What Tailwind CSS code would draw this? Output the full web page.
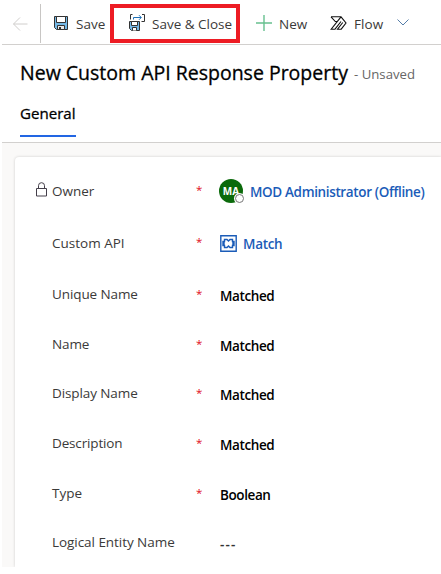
<!DOCTYPE html>
<html lang="en">
<head>
<meta charset="utf-8">
<title>New Custom API Response Property</title>
<script src="https://cdn.jsdelivr.net/npm/@tailwindcss/browser@4"></script>
</head>
<body class="h-[574px] w-[441px] overflow-hidden bg-white pl-[2px] font-['Segoe_UI','Open_Sans',sans-serif] text-[13.5px] leading-5 text-[#3b3a39]">
<header class="relative flex h-[45px] items-center border-b border-[#d2d0ce] pt-[3px]">
  <svg class="ml-[10px] h-4 w-4" viewBox="0 0 16 16" fill="none" stroke="#d0cecc"><path d="M15.5 8H1.5M8 1.5 1.5 8 8 14.500"/></svg>
  <i class="-mt-[1px] ml-[12px] h-[39px] w-px bg-[#c8c6c4]"></i>
  <svg class="-mt-[2px] ml-[12px] h-[16px] w-[16px]" viewBox="0 0 16 16"><path d="M1.500 1.500h13v13h-11l-2-2z" fill="#75b9e7" stroke="#333"/><path d="M3.500 1.500h9v6h-9z" fill="#fff" stroke="#333"/><path d="M4.500 14.500v-4h7v4z" fill="#e9e9e9" stroke="#333"/><path d="M6 12h2v2H6z" fill="#333"/></svg>
  <span class="ml-[7px] w-[53px] whitespace-nowrap">Save</span>
  <svg class="-mt-[2px] h-[17px] w-[16px]" viewBox="0 0 16 17" fill="none"><path d="M.500 7.500h10v9h-8l-2-2z" fill="#75b9e7" stroke="#333"/><path d="M2.500 7.500h6v4h-6z" fill="#fff" stroke="#333"/><path d="M3.500 16.500v-3h4v3" fill="#fff" stroke="#333"/><path d="M1.500 5.500v-5h2M13 .500h2.500v7h-3" stroke="#333"/><path d="M4.500 5.500v-2H12M10 1.200l2.300 2.300L10 5.800" stroke="#1d70b7"/></svg>
  <span class="ml-[7px] w-[104px] whitespace-nowrap">Save &amp; Close</span>
  <svg class="-mt-[1px] h-4 w-4" viewBox="0 0 16 16" stroke="#67c08f" stroke-width="1.400"><path d="M8 0v16M0 8h16"/></svg>
  <span class="ml-[7px] w-[51px] whitespace-nowrap">New</span>
  <svg class="-mt-[2px] h-[14px] w-[17px]" viewBox="0 0 17 14" fill="none" stroke="#111" stroke-width="1.100"><path d="M1 .8h10L16 7l-4.800 6.200H7.500L12.800 6.500M1 .8l4.300 4.700h2.200M11 .8 1.200 13.200H5L11 5.500"/></svg>
  <span class="ml-[7px] w-[43px] whitespace-nowrap tracking-[0.1px]">Flow</span>
  <svg class="-mt-[2px] h-[7px] w-[12px]" viewBox="0 0 12 7" fill="none" stroke="#557da8"><path d="M.5.5 6 6 11.500.5"/></svg>
  <div class="absolute left-[108px] top-[4px] h-[39px] w-[130px] border-4 border-[#ed1c24]"></div>
</header>
<section class="h-[98px] border-b border-[#d2d0ce] pl-[18px]">
  <div class="flex h-[54px] items-center">
    <h1 class="w-[334px] whitespace-nowrap pt-[1px] text-[19.5px] font-normal leading-7 text-black [-webkit-text-stroke:0.3px_black]">New Custom API Response Property</h1>
    <span class="mt-[3px] whitespace-nowrap text-[13.2px] text-[#666]">- Unsaved</span>
  </div>
  <div class="flex h-[38px] w-[56px] items-start border-b-2 border-[#2266e3] pt-[4px]"><span class="whitespace-nowrap text-[15.1px] font-normal text-black [-webkit-text-stroke:0.3px_black]">General</span></div>
</section>
<main class="h-[424px] bg-[#faf9f8] pl-[13px] pt-[14px]">
  <div class="h-[410px] rounded-tl-[4px] bg-white pt-[8px] shadow-[0_0_3px_rgba(0,0,0,.18)]">
    <div class="flex h-[52px] items-center">
      <svg class="-mt-[4px] ml-[21px] h-[15px] w-[11px]" viewBox="0 0 11 15" fill="none" stroke="#443f4a"><path d="M.5 6.500h10v7.500H.5zM2.500 6.500V3.700a3 3 0 0 1 6 0v2.800"/></svg>
      <span class="ml-[5px] w-[144px]">Owner</span><span class="-mt-[2px] w-[23px] text-[11.5px] text-[#e00b1c]">*</span>
      <div class="relative flex size-[24px] items-center justify-center rounded-full bg-[#0b6a0b] text-[10px] font-bold text-white">MA<i class="absolute -right-[1px] bottom-0 size-[9px] rounded-full border border-[#777] bg-white ring-1 ring-white"></i></div>
      <span class="ml-[7px] mt-[2px] whitespace-nowrap font-semibold tracking-[-0.36px] text-[#1b5cb8]">MOD Administrator (Offline)</span>
    </div>
    <div class="flex h-[53px] items-center pl-[37px]"><span class="-mt-[2px] w-[144px]">Custom API</span><span class="-mt-[3px] w-[24px] text-[11.5px] text-[#e00b1c]">*</span>
      <svg class="size-[17px]" viewBox="0 0 17 17" fill="none" stroke="#1b5cb8"><path d="M.8.8h15.400v15.400H.8z" stroke-width="1.400"/><path d="M4.500 6.500v-2h2.500l1.500 1.500L10 4.500h2.500v2h1.500v1.200h-1v1.600h1v1.200h-1.500v2H10L8.500 11 7 12.500H4.500v-2H3V9.300h1V7.700H3V6.500z" stroke-width="1.400"/></svg>
      <span class="ml-[6px] font-semibold tracking-[-0.3px] text-[#1b5cb8]">Match</span></div>
    <div class="flex h-[50px] items-center pl-[37px]"><span class="-mt-[2px] w-[144px] tracking-[-0.1px]">Unique Name</span><span class="-mt-[3px] w-[24px] text-[11.5px] text-[#e00b1c]">*</span><span class="mt-[2px] font-semibold tracking-[-0.4px] text-black">Matched</span></div>
    <div class="flex h-[50px] items-center pl-[37px]"><span class="-mt-[2px] w-[144px] tracking-[-0.1px]">Name</span><span class="-mt-[3px] w-[24px] text-[11.5px] text-[#e00b1c]">*</span><span class="mt-[2px] font-semibold tracking-[-0.4px] text-black">Matched</span></div>
    <div class="flex h-[49px] items-center pl-[37px]"><span class="-mt-[3px] w-[144px] tracking-[-0.1px]">Display Name</span><span class="-mt-[3px] w-[24px] text-[11.5px] text-[#e00b1c]">*</span><span class="mt-[1px] font-semibold tracking-[-0.4px] text-black">Matched</span></div>
    <div class="flex h-[50px] items-center pl-[37px]"><span class="-mt-[2px] w-[144px] tracking-[-0.15px]">Description</span><span class="-mt-[3px] w-[24px] text-[11.5px] text-[#e00b1c]">*</span><span class="mt-[2px] font-semibold tracking-[-0.4px] text-black">Matched</span></div>
    <div class="flex h-[50px] items-center pl-[37px]"><span class="-mt-[2px] w-[144px]">Type</span><span class="-mt-[3px] w-[24px] text-[11.5px] text-[#e00b1c]">*</span><span class="mt-[2px] font-semibold tracking-[-0.4px] text-black">Boolean</span></div>
    <div class="flex h-[48px] items-center pl-[37px]"><span class="-mt-[2px] w-[168px] tracking-[-0.05px]">Logical Entity Name</span><span class="mt-[1px] font-semibold tracking-[1.2px] text-[#333]">---</span></div>
  </div>
</main>
<footer class="h-[7px] bg-white"></footer>
</body>
</html>
